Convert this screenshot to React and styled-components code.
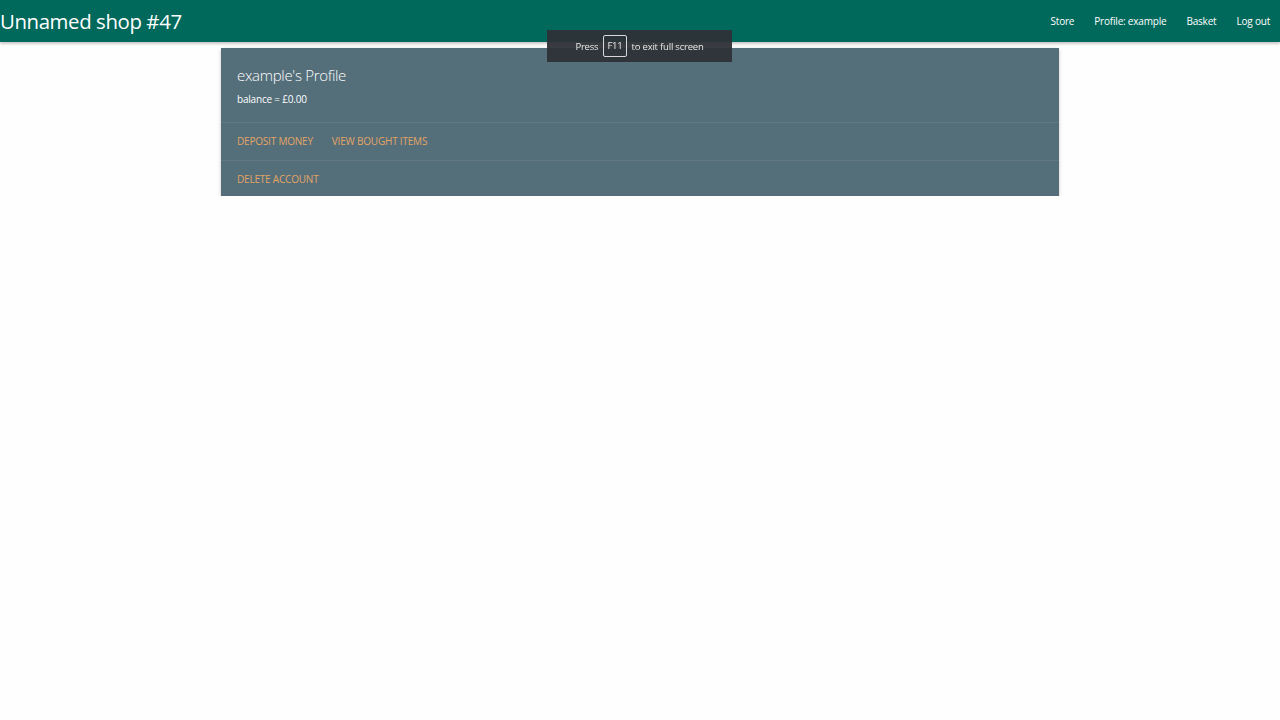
import React from "react";
import styled, { createGlobalStyle } from "styled-components";

const Global = createGlobalStyle`
  html, body { margin: 0; padding: 0; background: #fefefe; }
  body { font-family: "Open Sans", "Noto Sans", sans-serif; color: rgba(0,0,0,0.87); }
  * { box-sizing: border-box; }
`;

const Nav = styled.nav`
  height: 42px;
  background: #00695c;
  display: flex;
  align-items: center;
  justify-content: space-between;
  box-shadow: 0 2px 2px rgba(0,0,0,0.14), 0 1px 4px rgba(0,0,0,0.12);
  color: #fff;
`;

const Brand = styled.a`
  font-size: 20.4px;
  letter-spacing: -0.4px;
  color: #fff;
  text-decoration: none;
  line-height: 42px;
`;

const NavList = styled.ul`
  display: flex;
  list-style: none;
  margin: 0;
  padding: 0;
`;

const NavItem = styled.li`
  a {
    display: block;
    padding: 0 10px;
    font-size: 10px;
    letter-spacing: -0.2px;
    color: #fff;
    text-decoration: none;
    line-height: 42px;
  }
`;

const Main = styled.main`
  display: flex;
  justify-content: center;
  padding-top: 6px;
`;

const Card = styled.div`
  width: 838px;
  background: #546e7a;
  color: #fff;
  box-shadow: 0 2px 2px rgba(0,0,0,0.14), 0 1px 5px rgba(0,0,0,0.12), 0 3px 1px -2px rgba(0,0,0,0.2);
`;

const Content = styled.div`
  padding: 16px;
`;

const Title = styled.span`
  display: block;
  font-size: 15px;
  font-weight: 300;
  letter-spacing: -0.3px;
  line-height: 23px;
`;

const Balance = styled.p`
  margin: 5px 0 0;
  font-size: 10px;
  letter-spacing: -0.2px;
  line-height: 14px;
`;

const Action = styled.div`
  border-top: 1px solid rgba(160,160,160,0.2);
  padding: ${(p) => (p.$last ? "12px 16px 10px" : "12px 16px")};
  display: flex;
  gap: 19px;
  line-height: 13px;
`;

const ActionLink = styled.a`
  color: #e3a564;
  font-size: 10px;
  letter-spacing: -0.2px;
  text-transform: uppercase;
  text-decoration: none;
`;

const Toast = styled.div`
  position: fixed;
  top: 30px;
  left: 547px;
  width: 185px;
  height: 32px;
  background: rgba(45, 50, 55, 0.95);
  color: #e8e8e8;
  display: flex;
  align-items: center;
  justify-content: center;
  gap: 5px;
  font-size: 9.5px;
  letter-spacing: -0.2px;
`;

const Key = styled.span`
  border: 1px solid #d8d8d8;
  border-radius: 2px;
  padding: 0 3px;
  height: 22px;
  line-height: 20px;
  display: inline-block;
`;

export default function App() {
  return (
    <>
      <Global />
      <Nav>
        <Brand href="#">Unnamed shop #47</Brand>
        <NavList>
          <NavItem><a href="#">Store</a></NavItem>
          <NavItem><a href="#">Profile: example</a></NavItem>
          <NavItem><a href="#">Basket</a></NavItem>
          <NavItem><a href="#">Log out</a></NavItem>
        </NavList>
      </Nav>
      <Main>
        <Card>
          <Content>
            <Title>example's Profile</Title>
            <Balance>balance = £0.00</Balance>
          </Content>
          <Action>
            <ActionLink href="#">Deposit money</ActionLink>
            <ActionLink href="#">View bought items</ActionLink>
          </Action>
          <Action $last>
            <ActionLink href="#">Delete account</ActionLink>
          </Action>
        </Card>
      </Main>
      <Toast>
        <span>Press</span>
        <Key>F11</Key>
        <span>to exit full screen</span>
      </Toast>
    </>
  );
}
